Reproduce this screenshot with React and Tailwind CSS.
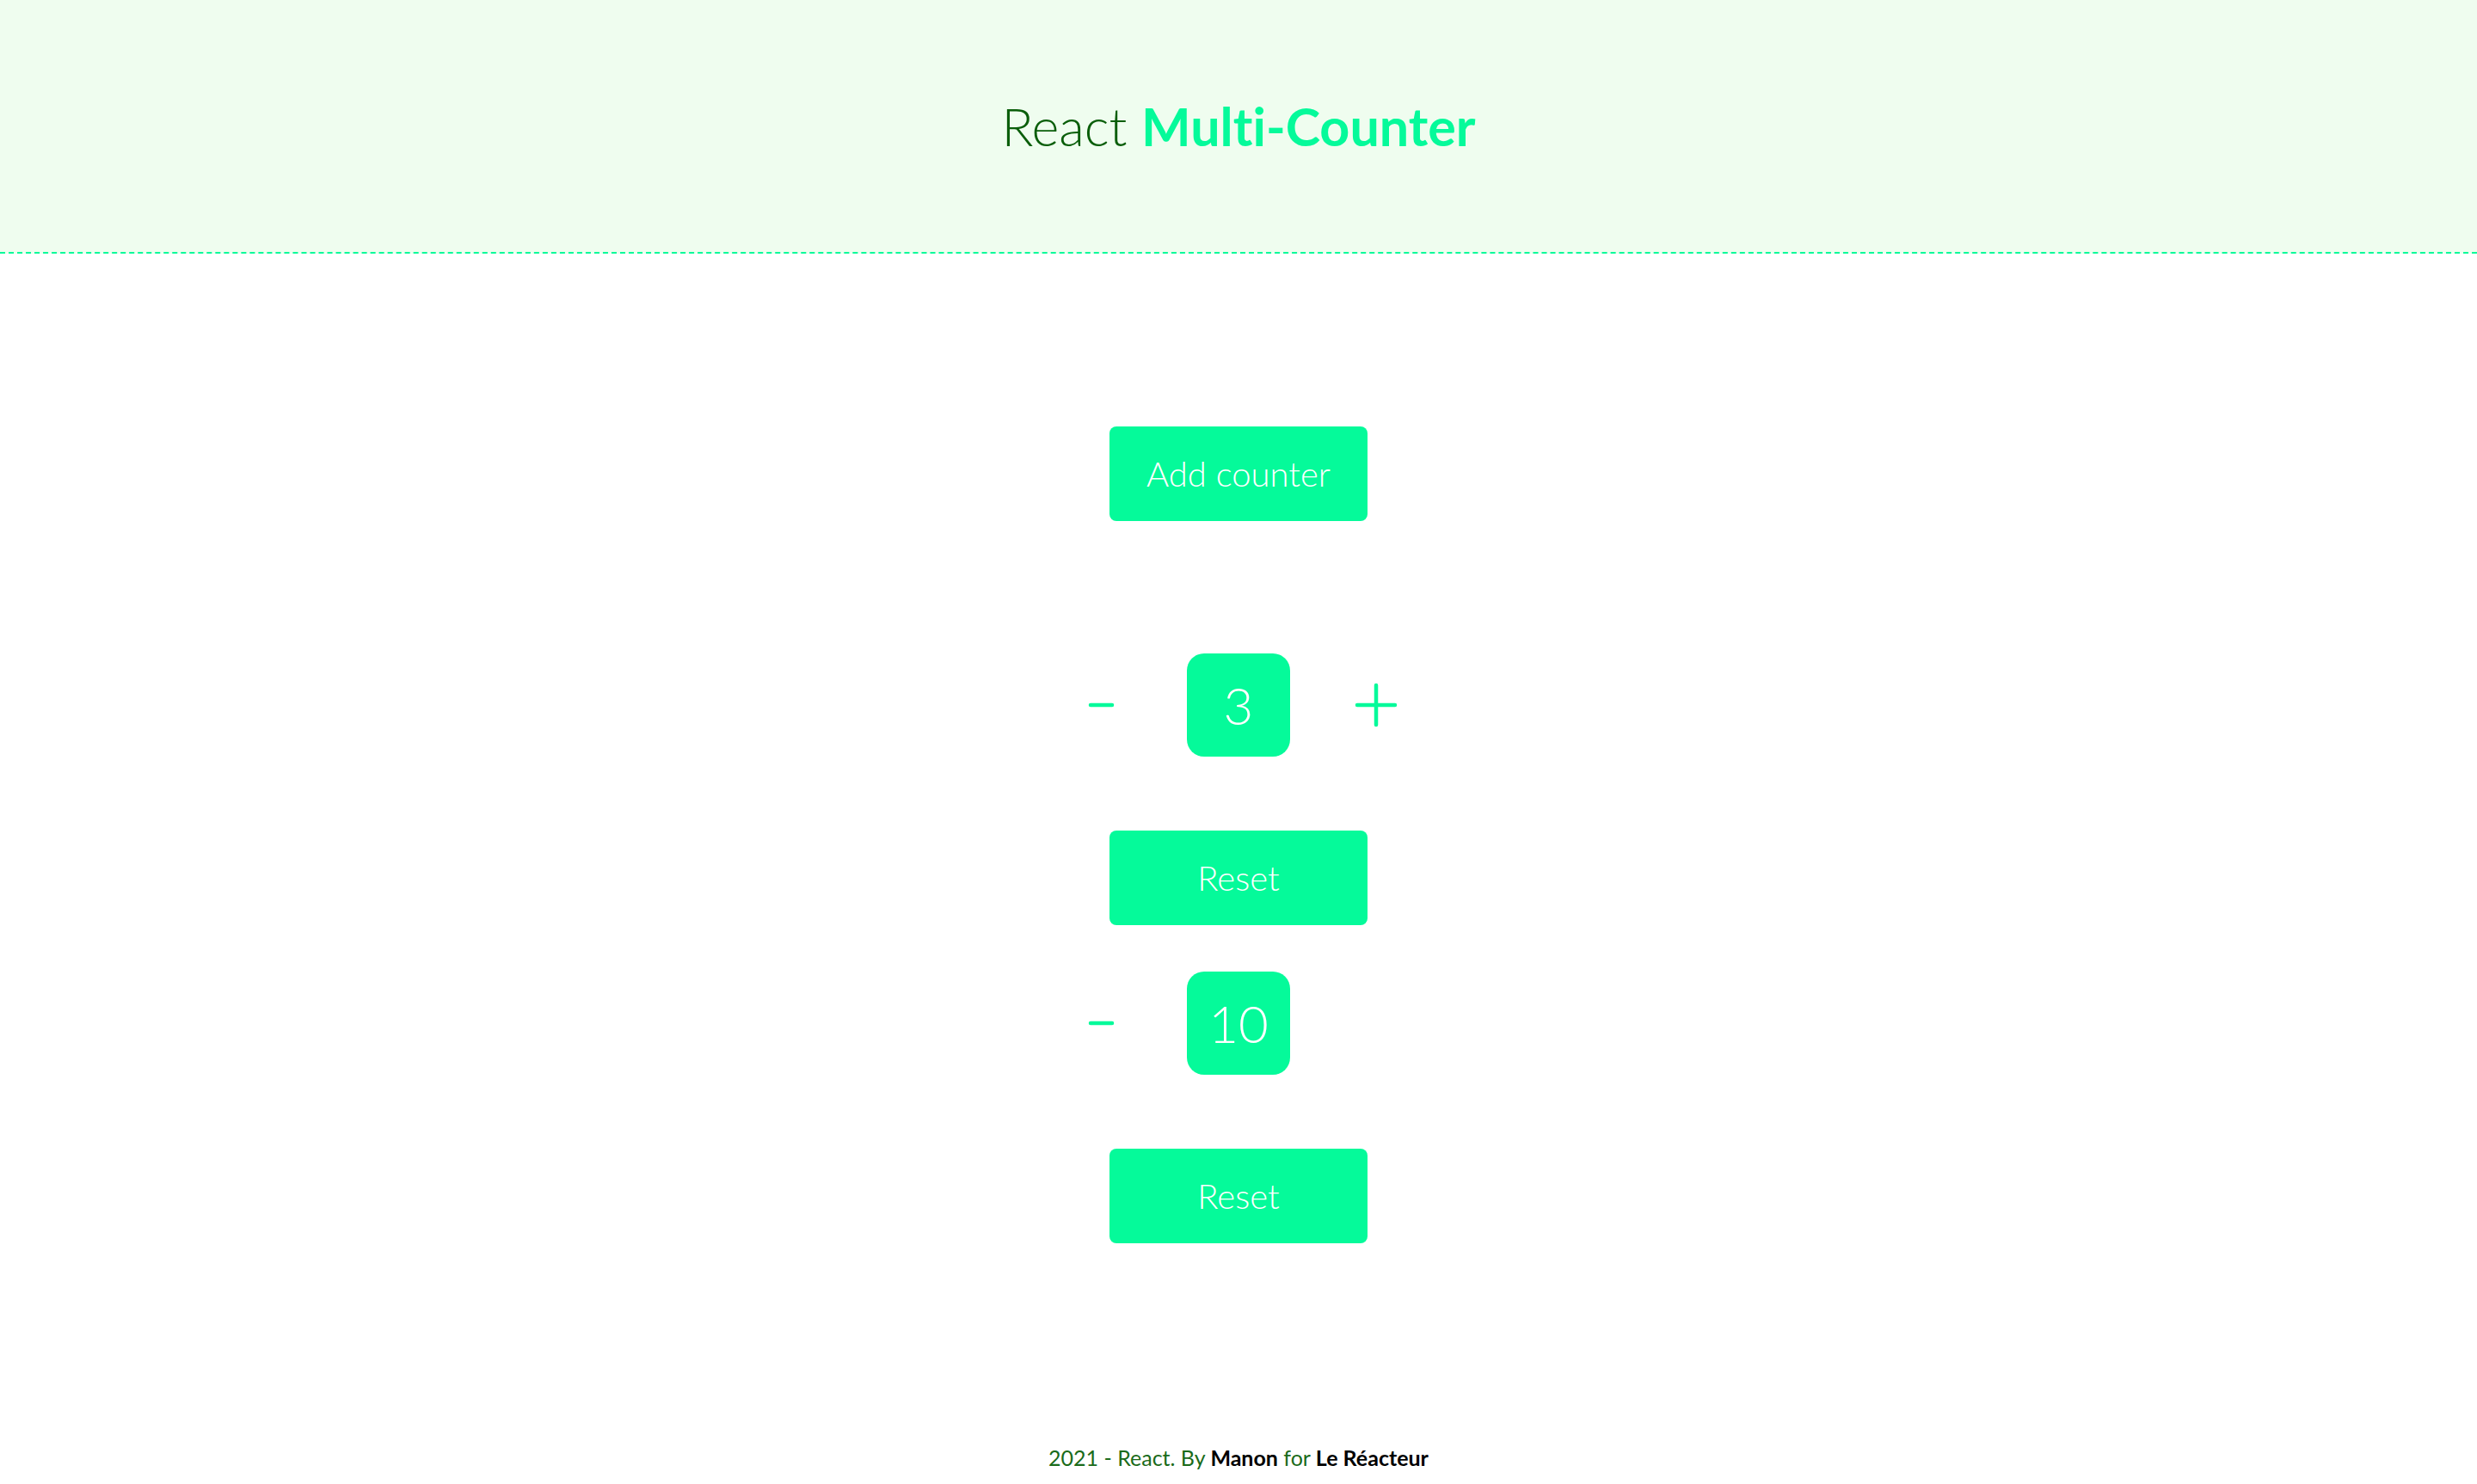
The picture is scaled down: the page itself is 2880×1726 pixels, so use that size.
import { useState } from "react";

const Counter = ({ value, onMinus, onPlus, onReset }) => {
  return (
    <div className="flex flex-col items-center">
      <div className="flex items-center gap-10">
        <button onClick={onMinus} className="w-[120px] h-[120px] flex items-center justify-center">
          <svg width="31" height="8" viewBox="0 0 31 8">
            <path d="M3 4h25" stroke="#05fa9a" strokeWidth="4.5" strokeLinecap="round" />
          </svg>
        </button>
        <div className="w-[120px] h-[120px] rounded-[20px] bg-[#05fa9a] flex items-center justify-center text-white text-[60px] font-light leading-none">
          {value}
        </div>
        <button
          onClick={onPlus}
          className={`w-[120px] h-[120px] flex items-center justify-center ${value >= 10 ? "invisible" : ""}`}
        >
          <svg width="50" height="52" viewBox="0 0 50 52">
            <path d="M3 26h44M25 3v46" stroke="#05fa9a" strokeWidth="4.5" strokeLinecap="round" />
          </svg>
        </button>
      </div>
      <button
        onClick={onReset}
        className="mt-[86px] w-[300px] h-[110px] rounded-lg bg-[#05fa9a] text-white text-[40px] font-light"
      >
        Reset
      </button>
    </div>
  );
};

const App = () => {
  const [counters, setCounters] = useState([3, 10]);

  const update = (index, value) => {
    setCounters((prev) => prev.map((c, i) => (i === index ? value : c)));
  };

  return (
    <div className="min-h-screen flex flex-col bg-white font-['Lato','Liberation_Sans',sans-serif] [font-variant-ligatures:none]">
      <header className="h-[295px] bg-[#effdef] border-b-2 border-dashed border-[#05fa9a] flex items-center justify-center">
        <h1 className="text-[61px] font-light text-[#0a5e0a]">
          React <span className="font-bold text-[#05fa9a]">Multi-Counter</span>
        </h1>
      </header>

      <main className="flex-1 flex flex-col items-center pt-[201px]">
        <button
          onClick={() => setCounters((prev) => [...prev, 0])}
          className="w-[300px] h-[110px] rounded-lg bg-[#05fa9a] text-white text-[40px] font-light"
        >
          Add counter
        </button>

        <div className="mt-[154px] flex flex-col gap-[54px]">
          {counters.map((value, index) => (
            <Counter
              key={index}
              value={value}
              onMinus={() => update(index, value - 1)}
              onPlus={() => update(index, value + 1)}
              onReset={() => update(index, 0)}
            />
          ))}
        </div>
      </main>

      {/* Footer */}
      <footer className="h-[60px] flex items-center justify-center text-[25px] text-[#1a6b1a]">
        2021 - React. By&nbsp;<span className="font-bold text-black">Manon</span>&nbsp;for&nbsp;
        <span className="font-bold text-black">Le Réacteur</span>
      </footer>
    </div>
  );
};

export default App;
